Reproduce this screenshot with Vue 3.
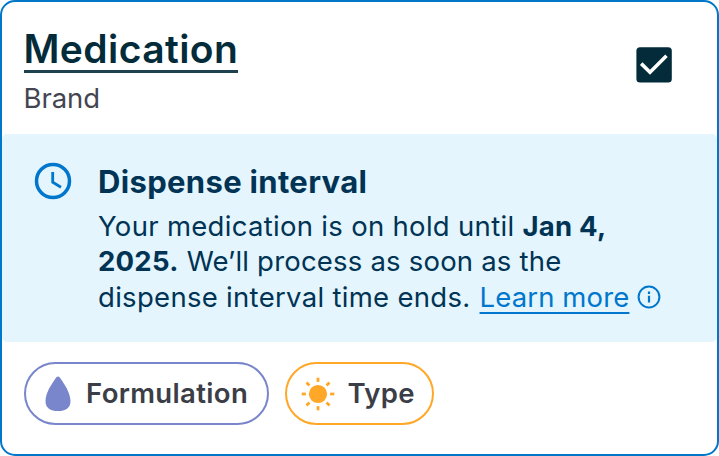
<script setup>
const rays = [0, 45, 90, 135, 180, 225, 270, 315]
</script>

<template>
  <article class="card">
    <header class="head">
      <div>
        <a class="title">Medication</a>
        <div class="brand">Brand</div>
      </div>
      <svg class="check" viewBox="0 0 36 36">
        <rect x="0.4" y="0.2" width="35.4" height="35.4" rx="3.6" fill="#032b3a" />
        <path d="M5.200 16.600 14 25.200 30.500 8.700" fill="none" stroke="#fff" stroke-width="3.600" />
      </svg>
    </header>
    <section class="notice">
      <svg class="clock" viewBox="0 0 38 38" fill="none" stroke="#0077cc">
        <circle cx="19" cy="19" r="16.500" stroke-width="3.500" />
        <path d="M18.700 10V20.300L27 25.200" stroke-width="2.800" />
      </svg>
      <div class="copy">
        <h2>Dispense interval</h2>
        <p>
          Your medication is on hold until <b>Jan 4, 2025.</b> <span class="tight">We’ll process as soon as the</span> dispense interval time ends.
          <span class="nowrap"><a class="link">Learn more</a><svg class="info" viewBox="0 0 24 24">
            <circle cx="12" cy="12" r="10.400" fill="none" stroke="#0077cc" stroke-width="2" />
            <path d="M12 10.800V17.600M12 6.400V8.900" stroke="#0077cc" stroke-width="2.200" />
          </svg></span>
        </p>
      </div>
    </section>
    <footer class="tags">
      <span class="tag formulation">
        <svg class="drop" viewBox="0 0 26 36">
          <path d="M13 .5C14 .5 14.7 1.3 15.3 2.2C19.5 8 25.5 17 25.5 25.2C25.5 32 20.5 35 13 35S.5 32 .5 25.2C.5 17 6.500 8 10.700 2.200C11.300 1.300 12 .500 13 .500Z" fill="#7986cb" />
        </svg>
        <span>Formulation</span>
      </span>
      <span class="tag type">
        <svg class="sun" viewBox="-17 -17 34 34">
          <circle r="9.100" fill="#ffa726" />
          <path v-for="a in rays" :key="a" d="M0-16.300V-12.100" :transform="`rotate(${a})`" stroke="#ffa726" stroke-width="2.800" />
        </svg>
        <span>Type</span>
      </span>
    </footer>
  </article>
</template>

<style>
body { background: #fff; }
</style>

<style scoped>
.card {
  box-sizing: border-box;
  width: 719px;
  height: 456px;
  border: 2px solid #0077c8;
  border-radius: 15px;
  background: #fff;
  font-family: Inter, sans-serif;
  display: flex;
  flex-direction: column;
}
.head {
  box-sizing: border-box;
  height: 132px;
  padding: 23px 45px 0 21.500px;
  display: flex;
  justify-content: space-between;
}
.title {
  display: inline-block;
  height: 45px;
  line-height: 48px;
  border-bottom: 3px solid #1d414e;
  font-size: 39px;
  font-weight: 600;
  letter-spacing: 0.4px;
  color: #032b3a;
}
.brand {
  margin-top: 7px;
  line-height: 36px;
  font-size: 27.500px;
  letter-spacing: -0.1px;
  color: #434651;
}
.check {
  width: 36px;
  height: 36px;
  margin-top: 22px;
}
.notice {
  box-sizing: border-box;
  height: 208px;
  padding: 28px 30px 0 32px;
  display: flex;
  border-radius: 5px;
  background: #e4f5fd;
  color: #003354;
}
.clock {
  flex: none;
  width: 38px;
  height: 38px;
}
.copy { margin-left: 26px; }
h2 {
  margin: 0;
  font-size: 31px;
  line-height: 39px;
  font-weight: 650;
  letter-spacing: 0.330px;
}
p {
  margin: 8px 0 0;
  width: 590px;
  padding-right: 5px;
  box-sizing: border-box;
  font-size: 27.500px;
  line-height: 35.300px;
  letter-spacing: 0.300px;
}
b {
  font-weight: 700;
  letter-spacing: 0.250px;
}
.tight { letter-spacing: 0.200px; }
.nowrap { white-space: nowrap; }
.link {
  margin-left: 1px;
  color: #0077cc;
  letter-spacing: 0.130px;
  text-decoration: underline;
  text-decoration-thickness: 2px;
  text-underline-offset: 5px;
  text-decoration-skip-ink: none;
}
.info {
  width: 24px;
  height: 24px;
  margin-left: 8px;
  vertical-align: -2px;
}
.tags {
  padding: 20px 0 0 22px;
  display: flex;
  gap: 16px;
}
.tag {
  box-sizing: border-box;
  height: 63px;
  border: 2px solid;
  border-radius: 32px;
  display: flex;
  align-items: center;
  font-size: 27.500px;
  font-weight: 600;
  letter-spacing: 0.350px;
}
.tag span {
  color: #3b3d47;
  padding-bottom: 2px;
}
.formulation {
  width: 245px;
  padding-left: 19px;
  border-color: #7986cb;
}
.type {
  width: 149px;
  padding-left: 14px;
  border-color: #ffa726;
}
.drop {
  width: 26px;
  height: 36px;
  margin-right: 15px;
}
.sun {
  width: 34px;
  height: 34px;
  margin-right: 12.500px;
}
</style>
